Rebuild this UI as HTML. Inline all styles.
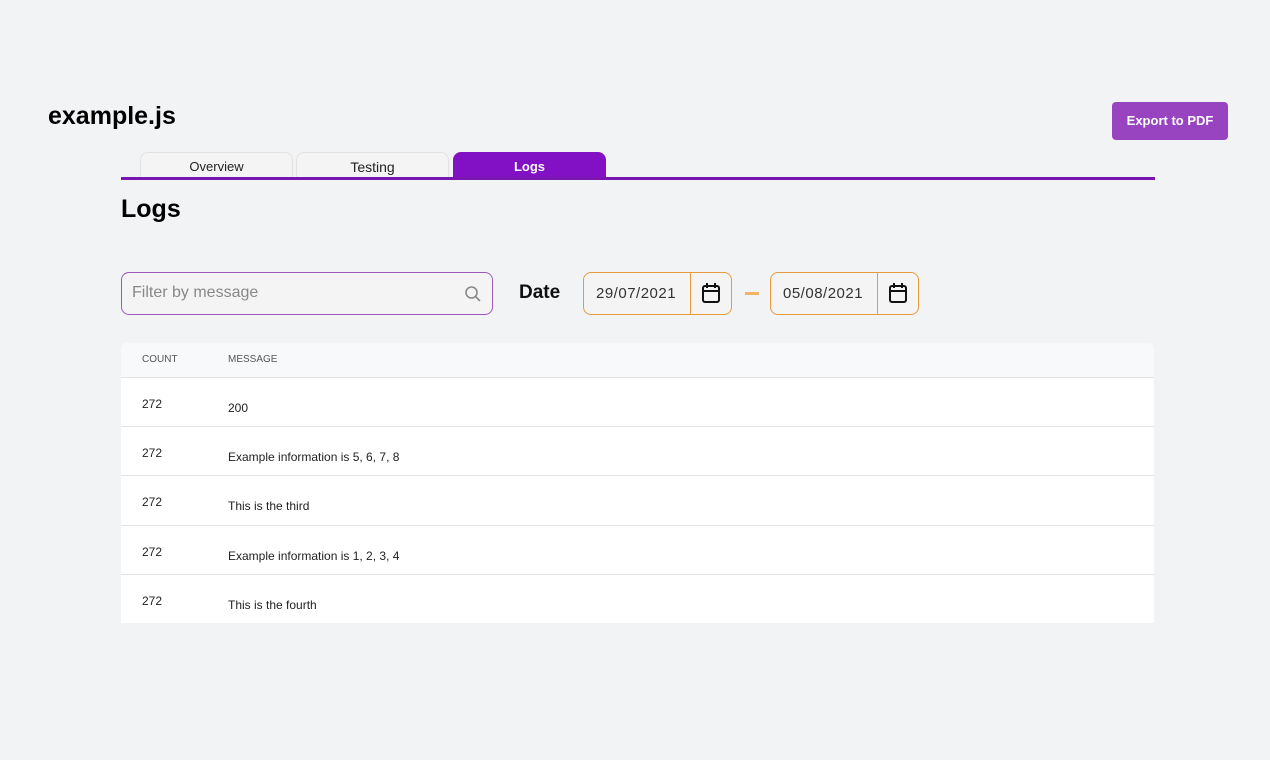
<!DOCTYPE html>
<html><head><style>
body{margin:0;width:1270px;height:760px;background:#f2f3f5;font-family:"Liberation Sans",sans-serif;position:relative;overflow:hidden}
.a{position:absolute}
.tab{position:absolute;top:152px;height:26px;border:1px solid #e2e2e2;border-bottom:none;border-radius:8px 8px 0 0;background:#f4f4f5;font-size:13px;text-align:center;line-height:28px;color:#222;box-sizing:border-box}
.inp{position:absolute;top:272px;height:43px;border:1px solid #e89a3c;border-radius:8px;box-sizing:border-box;background:#f4f4f5}
.row{position:absolute;left:121px;width:1033px;height:49px;border-top:1px solid #e4e4e4;background:#fff;font-size:12px;color:#222}
.row span{position:absolute}
</style></head><body>
<div class="a" style="left:48px;top:102px;font-size:25px;font-weight:bold">example.js</div>
<div class="a" style="left:1112px;top:102px;width:116px;height:38px;background:#9843c0;border-radius:4px;color:#fff;font-size:13px;font-weight:bold;text-align:center;line-height:38px">Export to PDF</div>
<div class="tab" style="left:140px;width:153px">Overview</div>
<div class="tab" style="left:296px;width:153px;font-size:14px">Testing</div>
<div class="tab" style="left:453px;width:153px;background:#8210c4;border-color:#8210c4;color:#fff;font-weight:bold">Logs</div>
<div class="a" style="left:121px;top:177px;width:1034px;height:3px;background:#7a16b0"></div>
<div class="a" style="left:121px;top:195px;font-size:25px;font-weight:bold">Logs</div>
<div class="a" style="left:121px;top:272px;width:372px;height:43px;border:1px solid #9c5ab8;border-radius:8px;box-sizing:border-box;background:#f4f4f5">
<span class="a" style="left:10px;top:11px;font-size:16px;color:#888">Filter by message</span>
<svg class="a" style="left:342px;top:12px" width="18" height="18" viewBox="0 0 18 18" fill="none" stroke="#888" stroke-width="1.6"><circle cx="7.5" cy="7.5" r="5.5"/><path d="M11.5 11.5L16 16"/></svg></div>
<div class="a" style="left:519px;top:282px;font-size:19px;font-weight:bold;color:#111">Date</div>
<div class="inp" style="left:583px;width:149px"><span class="a" style="left:12px;top:12px;font-size:15px;color:#333;letter-spacing:.5px">29/07/2021</span><div class="a" style="left:106px;top:0;width:1px;height:41px;background:#e89a3c"></div>
<svg class="a" style="left:117px;top:9px" width="20" height="22" viewBox="0 0 20 22" fill="none" stroke="#111" stroke-width="2"><rect x="2" y="4" width="16" height="16" rx="2"/><path d="M2 9h16M6 1v5M14 1v5"/></svg></div>
<div class="a" style="left:745px;top:292px;width:14px;height:3px;background:#f2b46a"></div>
<div class="inp" style="left:770px;width:149px"><span class="a" style="left:12px;top:12px;font-size:15px;color:#333;letter-spacing:.5px">05/08/2021</span><div class="a" style="left:106px;top:0;width:1px;height:41px;background:#e89a3c"></div>
<svg class="a" style="left:117px;top:9px" width="20" height="22" viewBox="0 0 20 22" fill="none" stroke="#111" stroke-width="2"><rect x="2" y="4" width="16" height="16" rx="2"/><path d="M2 9h16M6 1v5M14 1v5"/></svg></div>
<div class="a" style="left:121px;top:343px;width:1033px;height:34px;background:#f8f9fa;border-radius:6px 6px 0 0;font-size:10px;color:#555">
<span class="a" style="left:21px;top:11px">COUNT</span><span class="a" style="left:107px;top:11px">MESSAGE</span></div>
<div class="row" style="top:377px"><span style="left:21px;top:19px">272</span><span style="left:107px;top:23px">200</span></div>
<div class="row" style="top:426px"><span style="left:21px;top:19px">272</span><span style="left:107px;top:23px">Example information is 5, 6, 7, 8</span></div>
<div class="row" style="top:475px"><span style="left:21px;top:19px">272</span><span style="left:107px;top:23px">This is the third</span></div>
<div class="row" style="top:525px"><span style="left:21px;top:19px">272</span><span style="left:107px;top:23px">Example information is 1, 2, 3, 4</span></div>
<div class="row" style="top:574px;height:48px"><span style="left:21px;top:19px">272</span><span style="left:107px;top:23px">This is the fourth</span></div>
</body></html>
